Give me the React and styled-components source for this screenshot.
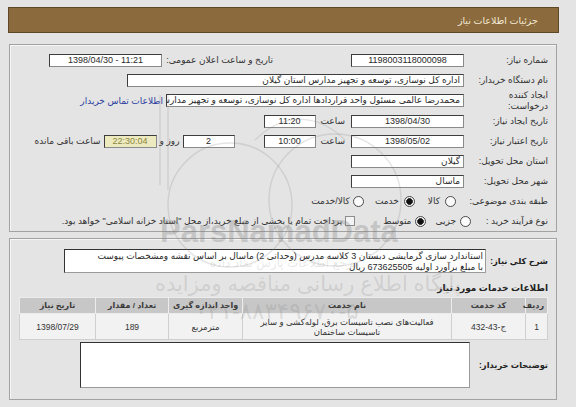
import React from "react";
import styled, { createGlobalStyle } from "styled-components";

const Global = createGlobalStyle`
  html, body { margin: 0; padding: 0; background: #e4e4e4; }
  body {
    font-family: "Liberation Sans", "DejaVu Sans", sans-serif;
    font-size: 9px;
    color: #2a2a2a;
  }
  * { box-sizing: border-box; }
`;

const Page = styled.div`
  direction: rtl;
  position: relative;
  width: 576px;
  height: 407px;
  padding: 7px 17px 0 8px;
  overflow: hidden;
  background: #e4e4e4;
`;

const TitleBar = styled.div`
  height: 26px;
  display: flex;
  align-items: center;
  padding-right: 20px;
  background: #8b6b3d;
  border: 1px solid #5f4828;
  color: #f3ead6;
  font-size: 9.5px;
`;

const Panel = styled.div`
  margin: ${(p) => p.$top}px 2px 0 1px;
  height: ${(p) => p.$h}px;
  border: 1px solid #a2a2a2;
  box-shadow: inset 1px 1px 0 #f6f6f6;
  padding: ${(p) => p.$pad};
  display: flex;
  flex-direction: column;
`;

const Row = styled.div`
  display: flex;
  align-items: center;
  height: ${(p) => p.$h || 20}px;
  flex-shrink: 0;
`;

const Label = styled.div`
  width: ${(p) => p.$w}px;
  margin-right: ${(p) => p.$mr || 0}px;
  flex-shrink: 0;
  line-height: 11px;
  white-space: ${(p) => (p.$wrap ? "normal" : "nowrap")};
  color: #333;
`;

const Text = styled.span`
  margin-right: ${(p) => p.$mr || 0}px;
  white-space: nowrap;
  flex-shrink: 0;
  color: ${(p) => p.$color || "#333"};
`;

const Field = styled.div`
  width: ${(p) => p.$w}px;
  height: 13px;
  margin-right: ${(p) => p.$mr || 0}px;
  flex-shrink: 0;
  background: ${(p) => (p.$hl ? "#eeeabf" : "#ffffff")};
  color: ${(p) => (p.$hl ? "#8a8640" : "#2a2a2a")};
  border: 1px solid #8a8a8a;
  border-top-color: #3d3d3d;
  border-left-color: #3d3d3d;
  padding: 0 3px;
  line-height: 11px;
  font-size: 9px;
  text-align: ${(p) => (p.$center ? "center" : "right")};
  direction: ${(p) => (p.$ltr ? "ltr" : "rtl")};
  white-space: nowrap;
  overflow: hidden;
`;

const Link = styled.span`
  margin-right: 3px;
  color: #2b3d9e;
  white-space: nowrap;
`;

const Radio = styled.span`
  width: 11px;
  height: 11px;
  margin-right: ${(p) => p.$mr || 0}px;
  flex-shrink: 0;
  border-radius: 50%;
  border: 1px solid #4a4a4a;
  background: ${(p) =>
    p.$on
      ? "radial-gradient(circle, #111 0 2.6px, #555 3.2px, #f2f2f2 3.6px)"
      : "#fbfbfb"};
`;

const Check = styled.span`
  width: 10px;
  height: 10px;
  margin-right: ${(p) => p.$mr || 0}px;
  flex-shrink: 0;
  border: 1px solid #8d8d8d;
  background: #f3f3f3;
`;

const BoldLabel = styled.div`
  width: ${(p) => p.$w}px;
  flex-shrink: 0;
  font-weight: bold;
  font-size: 8.3px;
  color: #222;
  white-space: nowrap;
`;

const Box = styled.div`
  width: ${(p) => p.$w}px;
  height: ${(p) => p.$h}px;
  flex-shrink: 0;
  background: #fff;
  border: 1px solid #9a9a9a;
  border-top-color: #333;
  border-left-color: #333;
  padding: 1px 2px;
  line-height: 11px;
  font-size: 9px;
  white-space: nowrap;
  overflow: hidden;
`;

const Heading = styled.div`
  height: 24px;
  padding-top: 9px;
  line-height: 12px;
  font-weight: bold;
  font-size: 9px;
  color: #222;
  flex-shrink: 0;
`;

const Table = styled.table`
  width: 100%;
  border-collapse: collapse;
  table-layout: fixed;
  flex-shrink: 0;
`;

const Th = styled.th`
  height: 16px;
  padding: 0;
  background: #c7c7c7;
  border: 1px solid #ececec;
  font-size: 8px;
  font-weight: bold;
  color: #3a3a3a;
  text-align: ${(p) => (p.$right ? "right" : "center")};
  padding-right: ${(p) => (p.$right ? "3px" : "0")};
`;

const Td = styled.td`
  height: 26px;
  padding: 0 2px;
  background: #f2f2f2;
  border: 1px solid #cfcfcf;
  font-size: 8.5px;
  line-height: 10px;
  color: #333;
  text-align: center;
`;

const Overlay = styled.div`
  position: absolute;
  inset: 0;
  pointer-events: none;
`;

const Mark = styled.div`
  position: absolute;
  left: ${(p) => p.$x}px;
  top: ${(p) => p.$y}px;
  font-size: ${(p) => p.$s}px;
  font-weight: ${(p) => (p.$bold ? "bold" : "normal")};
  color: rgba(120, 120, 120, ${(p) => p.$a});
  white-space: nowrap;
  direction: ${(p) => (p.$ltr ? "ltr" : "rtl")};
`;

const Svg = styled.svg`
  position: absolute;
  left: 0;
  top: 0;
`;

const cols = [22, 74, 209, 74, 73, 76];

export default function App() {
  return (
    <Page>
      <Global />
      <TitleBar>جزئیات اطلاعات نیاز</TitleBar>

      <Panel $top={11} $h={188} $pad="5px 8px 0 0">
        <Row>
          <Label $w={84}>شماره نیاز:</Label>
          <Field $w={113} $center $ltr>1198003118000098</Field>
          <Label $w={107} $mr={78}>تاریخ و ساعت اعلان عمومی:</Label>
          <Field $w={113} $mr={4} $center $ltr>1398/04/30 - 11:21</Field>
        </Row>
        <Row>
          <Label $w={84}>نام دستگاه خریدار:</Label>
          <Field $w={337}>اداره کل نوسازی، توسعه و تجهیز مدارس استان گیلان</Field>
        </Row>
        <Row $h={21}>
          <Label $w={84} $wrap>
            ایجاد کننده
            <br />
            درخواست:
          </Label>
          <Field $w={298}>محمدرضا عالمی مسئول واحد قراردادها اداره کل نوسازی، توسعه و تجهیز مدارس</Field>
          <Link>اطلاعات تماس خریدار</Link>
        </Row>
        <Row>
          <Label $w={84}>تاریخ ایجاد نیاز:</Label>
          <Field $w={113} $center $ltr>1398/04/30</Field>
          <Text $mr={6}>ساعت</Text>
          <Field $w={52} $mr={5} $center $ltr>11:20</Field>
        </Row>
        <Row>
          <Label $w={84}>تاریخ اعتبار نیاز:</Label>
          <Field $w={113} $center $ltr>1398/05/02</Field>
          <Text $mr={6}>ساعت</Text>
          <Field $w={52} $mr={5} $center $ltr>10:00</Field>
          <Field $w={52} $mr={29} $center $ltr>2</Field>
          <Text $mr={3}>روز و</Text>
          <Field $w={53} $mr={3} $center $ltr $hl>22:30:04</Field>
          <Text $mr={3}>ساعت باقی مانده</Text>
        </Row>
        <Row>
          <Label $w={84}>استان محل تحویل:</Label>
          <Field $w={113}>گیلان</Field>
        </Row>
        <Row>
          <Label $w={84}>شهر محل تحویل:</Label>
          <Field $w={113}>ماسال</Field>
        </Row>
        <Row>
          <Label $w={92}>طبقه بندی موضوعی:</Label>
          <Radio />
          <Text $mr={5}>کالا</Text>
          <Radio $mr={13} $on />
          <Text $mr={5}>خدمت</Text>
          <Radio $mr={11} />
          <Text $mr={3}>کالا/خدمت</Text>
        </Row>
        <Row>
          <Label $w={77}>نوع فرآیند خرید :</Label>
          <Radio />
          <Text $mr={4}>جزیی</Text>
          <Radio $mr={9} $on />
          <Text $mr={4}>متوسط</Text>
          <Check $mr={28} />
          <Text $mr={3}>
            پرداخت تمام یا بخشی از مبلغ خرید،از محل "اسناد خزانه اسلامی" خواهد بود.
          </Text>
        </Row>
      </Panel>

      <Panel $top={6} $h={162} $pad="10px 8px 0 9px">
        <Row $h={24}>
          <BoldLabel $w={62}>شرح کلي نیاز:</BoldLabel>
          <Box $w={422} $h={24}>
            استاندارد سازی گرمایشی دبستان 3 کلاسه مدرس (وحدانی 2) ماسال بر اساس نقشه ومشخصات پیوست
            <br />
            با مبلغ برآورد اولیه 673625505 ریال
          </Box>
        </Row>
        <Heading>اطلاعات خدمات مورد نیاز</Heading>
        <Table>
          <colgroup>
            {cols.map((w, i) => (
              <col key={i} style={{ width: w }} />
            ))}
          </colgroup>
          <thead>
            <tr>
              <Th $right>ردیف</Th>
              <Th>کد خدمت</Th>
              <Th>نام خدمت</Th>
              <Th>واحد اندازه گیری</Th>
              <Th>تعداد / مقدار</Th>
              <Th>تاریخ نیاز</Th>
            </tr>
          </thead>
          <tbody>
            <tr>
              <Td>1</Td>
              <Td>ج-43-432</Td>
              <Td>فعالیت‌های نصب تاسیسات برق، لوله‌کشی و سایر<br />تاسیسات ساختمان</Td>
              <Td>مترمربع</Td>
              <Td>189</Td>
              <Td>1398/07/29</Td>
            </tr>
          </tbody>
        </Table>
        <Row $h={50}>
          <BoldLabel $w={78}>توضیحات خریدار:</BoldLabel>
          <Box $w={390} $h={46} />
        </Row>
      </Panel>

      <Overlay>
        <Svg width="576" height="407" viewBox="0 0 576 407">
          <g fill="none" stroke="rgba(130,130,130,0.22)" strokeWidth="1.4">
            <path d="M160 95 L160 185 M168 95 L168 190" />
            <circle cx="230" cy="205" r="62" />
            <circle cx="335" cy="200" r="66" />
            <path d="M255 140 C 285 110, 320 115, 345 140" />
          </g>
        </Svg>
        <Mark $x={160} $y={214} $s={31} $bold $a={0.3} $ltr>ParsNamadData</Mark>
        <Mark $x={210} $y={256} $s={12} $a={0.18}>مرجع اطلاعات پارس نماد داده</Mark>
        <Mark $x={155} $y={272} $s={21} $a={0.2}>پایگاه اطلاع رسانی مناقصه ومزایده</Mark>
        <Mark $x={195} $y={298} $s={23} $a={0.2} $ltr>۰۲۱-۸۸۳۴۹۶۷۰-۵</Mark>
      </Overlay>
    </Page>
  );
}
